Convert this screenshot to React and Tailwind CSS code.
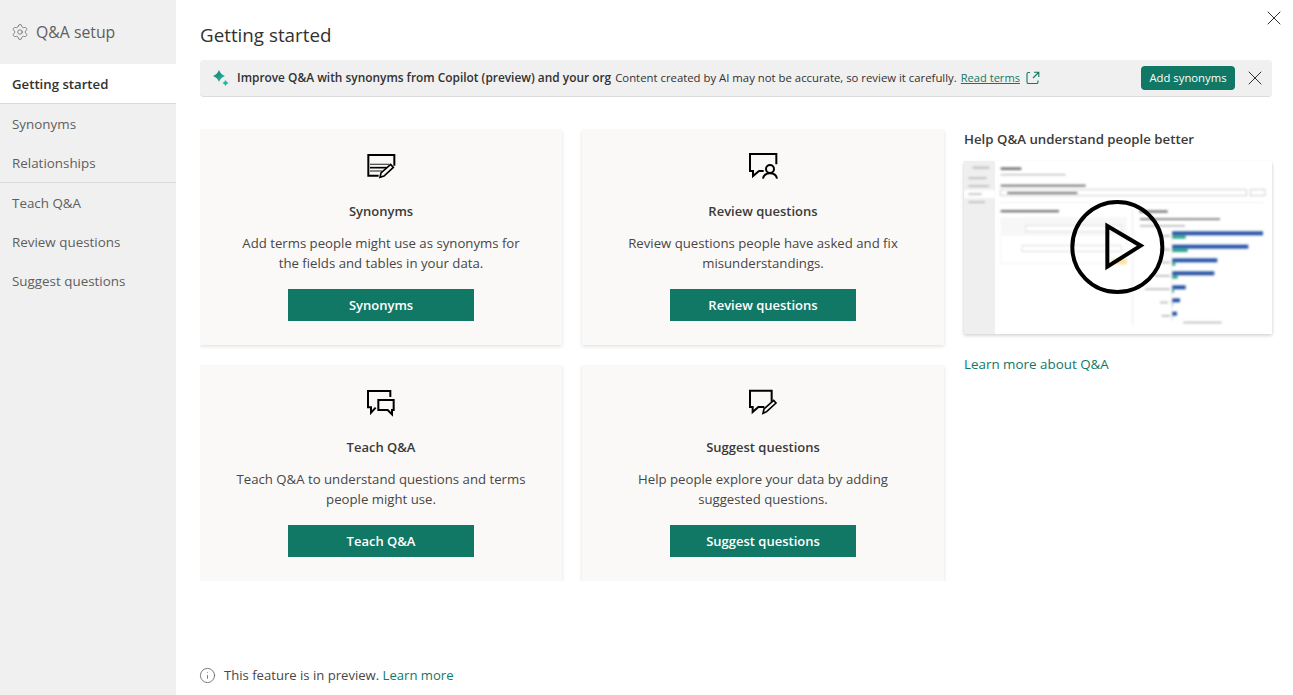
import { Settings, X, Info } from 'lucide-react'

const font = "font-['Open_Sans','Noto_Sans',sans-serif]"

function SynonymsIcon() {
  return (
    <svg width="60" height="40" viewBox="3 0 180 120" fill="none" stroke="#000" strokeWidth="6">
      <path d="M133 62V30H55V92H86" />
      <path d="M60 58H118" strokeWidth="4" stroke="#555" />
      <path d="M60 68H110" strokeWidth="5" />
      <path d="M60 78H96" strokeWidth="4" stroke="#555" />
      <path d="M90 97l3-13 29-26 8 9-28 26z" strokeWidth="5" />
    </svg>
  )
}

function ReviewIcon() {
  return (
    <svg width="60" height="40" viewBox="-6 0 180 120" fill="none" stroke="#000" strokeWidth="6">
      <path d="M124 58V27H45V78H54V93L72 78H86" />
      <circle cx="105" cy="72" r="12" />
      <path d="M84 101c2-11 10-16 21-16s19 5 21 16" />
    </svg>
  )
}

function TeachIcon() {
  return (
    <svg width="60" height="40" viewBox="3 0 180 120" fill="none" stroke="#000" strokeWidth="6">
      <path d="M121 48V30H54V79H63V95L77 80" />
      <path d="M85 57H131V87H126V100L113 87H85Z" />
    </svg>
  )
}

function SuggestIcon() {
  return (
    <svg width="60" height="40" viewBox="-6 0 180 120" fill="none" stroke="#000" strokeWidth="6">
      <path d="M110 62V29H45V78H53V93L70 78H88" />
      <path d="M84 97l3-13 29-26 7 8-28 26z" strokeWidth="5" />
    </svg>
  )
}

function Sparkle() {
  return (
    <svg width="18" height="18" viewBox="0 0 18 18">
      <defs>
        <linearGradient id="spark" x1="0" y1="0" x2="1" y2="1">
          <stop offset="0" stopColor="#117865" />
          <stop offset="1" stopColor="#2dbdb0" />
        </linearGradient>
      </defs>
      <path d="M7 1Q8.600 5.400 13 7 8.600 8.600 7 13 5.400 8.600 1 7 5.400 5.400 7 1Z" fill="url(#spark)" />
      <path d="M13.500 11Q14.300 13.200 16.500 14 14.300 14.800 13.500 17 12.700 14.800 10.500 14 12.700 13.200 13.500 11Z" fill="#2ab5a8" />
    </svg>
  )
}

function ExternalIcon() {
  return (
    <svg width="14" height="14" viewBox="0 0 14 14" fill="none" stroke="#117865" strokeWidth="1.100">
      <path d="M4 1.500H2.500a1.500 1.500 0 0 0-1.500 1.500v8a1.500 1.500 0 0 0 1.500 1.500h8a1.500 1.500 0 0 0 1.500-1.500V9.500" />
      <path d="M7 7l5.500-5.500M8 1.200h4.800V6" />
    </svg>
  )
}

// the video still is blurry in the original, so it's drawn as a blurred wireframe
function VideoThumb() {
  const bars = [
    [229, 273, 41], [269, 229, 47], [310, 136, 10], [349, 127, 17], [391, 41, 6], [430, 24, 2], [470, 15, 1],
  ]
  return (
    <svg width="308" height="173" viewBox="12 18 924 519" className="block">
      <defs>
        <filter id="blur"><feGaussianBlur stdDeviation="2.500" /></filter>
      </defs>
      <rect x="12" y="18" width="924" height="519" fill="#fff" />
      <rect x="12" y="18" width="93" height="519" fill="#efefef" />
      <g filter="url(#blur)">
        <rect x="12" y="105" width="93" height="24" fill="#fff" />
        <g fill="#bbb">
          <rect x="38" y="35" width="50" height="6" />
          <rect x="25" y="67" width="55" height="5" />
          <rect x="25" y="91" width="62" height="5" />
          <rect x="25" y="115" width="40" height="5" />
          <rect x="25" y="139" width="50" height="5" />
          <rect x="122" y="57" width="195" height="4" />
          <rect x="140" y="197" width="22" height="5" />
          <rect x="140" y="218" width="48" height="5" />
          <rect x="140" y="280" width="40" height="5" />
          <rect x="190" y="280" width="190" height="5" />
          <rect x="540" y="210" width="135" height="5" />
          <rect x="670" y="500" width="115" height="5" />
          <rect x="555" y="400" width="75" height="5" />
          <rect x="600" y="240" width="30" height="5" />
          <rect x="600" y="281" width="30" height="5" />
          <rect x="605" y="320" width="25" height="5" />
          <rect x="585" y="360" width="45" height="5" />
          <rect x="600" y="440" width="25" height="5" />
          <rect x="605" y="480" width="25" height="5" />
        </g>
        <g fill="#777">
          <rect x="122" y="37" width="62" height="8" />
          <rect x="122" y="89" width="255" height="6" />
          <rect x="122" y="165" width="175" height="7" />
          <rect x="538" y="166" width="85" height="7" />
          <rect x="142" y="111" width="210" height="6" />
          <rect x="540" y="190" width="240" height="5" />
        </g>
        <rect x="122" y="104" width="737" height="18" fill="none" stroke="#bbb" strokeWidth="2" />
        <rect x="871" y="104" width="44" height="18" fill="none" stroke="#bbb" strokeWidth="2" />
        <rect x="122" y="142" width="792" height="2" fill="#e5e5e5" />
        <rect x="122" y="187" width="378" height="51" fill="#f7f7f7" />
        <rect x="198" y="212" width="286" height="18" fill="#fff" stroke="#ccc" strokeWidth="2" />
        <rect x="122" y="240" width="378" height="85" fill="#fff" stroke="#eee" strokeWidth="2" />
        <rect x="186" y="272" width="298" height="18" fill="#fff" stroke="#ccc" strokeWidth="2" />
        <rect x="456" y="311" width="44" height="17" fill="#fbe39a" />
        <rect x="517" y="160" width="2" height="348" fill="#e0e0e0" />
        <rect x="635" y="228" width="2" height="270" fill="#ddd" />
        {bars.map(([y, blue, teal]) => (
          <g key={y}>
            <rect x="636" y={y} width={blue} height="12" fill="#2b55a8" />
            <rect x="636" y={y + 12} width={teal} height="10" fill="#2aa58c" />
          </g>
        ))}
      </g>
      <circle cx="472" cy="276" r="135" fill="none" stroke="#000" strokeWidth="12" />
      <path d="M442 213L542 272L442 335Z" fill="none" stroke="#000" strokeWidth="12" />
    </svg>
  )
}

function NavItem({ children, active }) {
  return (
    <div className={`h-[39px] flex items-center pl-3 pt-[2px] ${active ? 'bg-white font-semibold text-[13.2px] text-[#323130]' : 'text-[13.4px] text-[#605e5c]'}`}>
      {children}
    </div>
  )
}

function Card({ icon, title, text }) {
  return (
    <div className="h-[216px] bg-[#faf9f8] shadow-[0_1.6px_3.6px_rgba(0,0,0,0.13),0_0.3px_0.9px_rgba(0,0,0,0.11)] flex flex-col items-center">
      <div className="mt-4 h-10">{icon}</div>
      <h2 className="mt-4 text-[13px] leading-5 font-semibold text-[#3b3a39]">{title}</h2>
      <p className="mt-3 w-[296px] h-10 text-center text-[13.2px] leading-5 text-[#484644]">{text}</p>
      <button className="mt-4 w-[186px] h-8 pt-[2px] bg-[#117865] text-white text-[13px] font-semibold">{title}</button>
    </div>
  )
}

export default function App() {
  return (
    <div className={`relative h-screen flex overflow-hidden bg-white ${font}`}>
      <aside className="w-[176px] shrink-0 bg-[#f0f0f0]">
        <div className="h-16 flex items-center gap-[7px] pl-[11px] pt-[2px] text-[15.8px] text-[#605e5c]">
          <Settings size={18} strokeWidth={1} className="-mt-[2px]" />
          Q&amp;A setup
        </div>
        <div className="border-b border-[#d9d9d9]">
          <NavItem active>Getting started</NavItem>
        </div>
        <div className="border-b border-[#d9d9d9]">
          <NavItem>Synonyms</NavItem>
          <NavItem>Relationships</NavItem>
        </div>
        <NavItem>Teach Q&amp;A</NavItem>
        <NavItem>Review questions</NavItem>
        <NavItem>Suggest questions</NavItem>
      </aside>

      <main className="flex-1 min-w-0 flex flex-col pl-6 pr-[21px]">
        <h1 className="mt-[21px] text-[18.8px] leading-7 font-medium text-[#323130]">Getting started</h1>

        <div className="mt-[11px] h-[37px] flex items-center rounded-sm bg-[#f0f0f0] border-b border-[#dcdcdc] pl-3 pr-[5px] text-[11.35px] text-[#323130]">
          <Sparkle />
          <span className="ml-[7px] text-[11.9px] font-semibold">Improve Q&amp;A with synonyms from Copilot (preview) and your org</span>
          <span className="ml-1">Content created by AI may not be accurate, so review it carefully.</span>
          <a className="ml-1 text-[11.1px] text-[#117865] underline">Read terms</a>
          <span className="ml-[6px]"><ExternalIcon /></span>
          <button className="ml-auto h-6 w-[94px] rounded bg-[#117865] text-white text-[11.3px] font-medium">Add synonyms</button>
          <X size={24} strokeWidth={1} className="ml-2 text-[#323130]" />
        </div>

        <div className="mt-8 h-[452px] flex gap-5 overflow-hidden -mr-2 pr-2">
          <div className="w-[744px] shrink-0 grid grid-cols-2 gap-5 content-start">
            <Card icon={<SynonymsIcon />} title="Synonyms" text="Add terms people might use as synonyms for the fields and tables in your data." />
            <Card icon={<ReviewIcon />} title="Review questions" text="Review questions people have asked and fix misunderstandings." />
            <Card icon={<TeachIcon />} title="Teach Q&A" text="Teach Q&A to understand questions and terms people might use." />
            <Card icon={<SuggestIcon />} title="Suggest questions" text="Help people explore your data by adding suggested questions." />
          </div>
          <div className="w-[308px] shrink-0">
            <h2 className="text-[13.25px] leading-5 font-semibold text-[#3b3a39]">Help Q&amp;A understand people better</h2>
            <div className="mt-3 shadow-[0_1.6px_3.6px_rgba(0,0,0,0.2),0_0.3px_0.9px_rgba(0,0,0,0.15)]">
              <VideoThumb />
            </div>
            <a className="block mt-5 text-[13.4px] leading-5 text-[#117865]">Learn more about Q&amp;A</a>
          </div>
        </div>

        <div className="mt-auto mb-[10px] flex items-center gap-2 text-[13.1px] leading-5 text-[#484644]">
          <Info size={17} strokeWidth={1} className="-ml-px" />
          <span>This feature is in preview. <a className="text-[#117865]">Learn more</a></span>
        </div>
      </main>

      <X size={24} strokeWidth={1} className="absolute top-[6px] right-[7px] text-[#323130]" />
    </div>
  )
}
